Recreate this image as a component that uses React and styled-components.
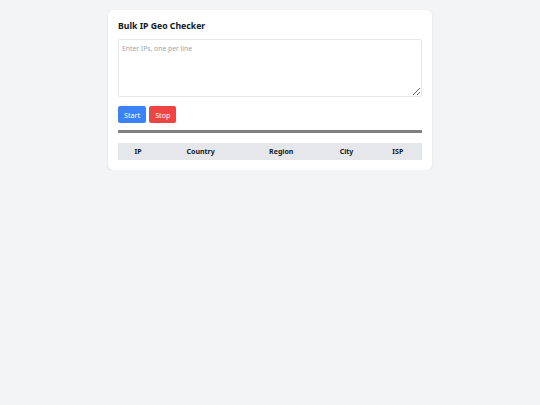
import React, { useState } from 'react';
import styled, { createGlobalStyle } from 'styled-components';

const GlobalStyle = createGlobalStyle`
  body {
    margin: 0;
    background: #f3f4f6;
    font-family: "Noto Sans", "Open Sans", sans-serif;
    color: #111827;
  }
`;

const Card = styled.div`
  width: 304px;
  margin: 10px auto 0;
  padding: 10px;
  background: #fff;
  border-radius: 6px;
  box-shadow: 0 1px 3px rgba(0, 0, 0, 0.08);
`;

const Title = styled.h1`
  margin: 0 0 7px;
  font-size: 8.7px;
  line-height: 12px;
  font-weight: 700;
`;

const TextArea = styled.textarea`
  display: block;
  box-sizing: border-box;
  width: 100%;
  height: 58px;
  padding: 4px 3px;
  border: 1px solid #e5e7eb;
  border-radius: 2px;
  font-family: inherit;
  font-size: 6.8px;
  resize: vertical;
  outline: none;

  &::placeholder {
    color: #9ca3af;
  }
`;

const Actions = styled.div`
  display: flex;
  gap: 3px;
  margin-top: 9px;
`;

const Button = styled.button`
  height: 17px;
  padding: 0 6px;
  border: none;
  border-radius: 2px;
  background: ${(p) => (p.$danger ? '#ef4444' : '#3b82f6')};
  color: #fff;
  font-family: inherit;
  font-size: 7.2px;
  cursor: pointer;
`;

const Progress = styled.div`
  height: 3px;
  margin-top: 7px;
  background: #808080;
`;

const Table = styled.table`
  width: 100%;
  margin-top: 10px;
  border-collapse: collapse;
  font-size: 7px;
`;

const Th = styled.th`
  height: 17px;
  padding: 0 6px;
  background: #e5e7eb;
  font-weight: 700;
  text-align: center;
`;

const App = () => {
  const [ips, setIps] = useState('');

  return (
    <>
      <GlobalStyle />
      <Card>
        <Title>Bulk IP Geo Checker</Title>
        <TextArea
          placeholder="Enter IPs, one per line"
          value={ips}
          onChange={(e) => setIps(e.target.value)}
        />
        <Actions>
          <Button>Start</Button>
          <Button $danger>Stop</Button>
        </Actions>
        <Progress />
        <Table>
          <thead>
            <tr>
              <Th>IP</Th>
              <Th>Country</Th>
              <Th>Region</Th>
              <Th>City</Th>
              <Th>ISP</Th>
            </tr>
          </thead>
        </Table>
      </Card>
    </>
  );
};

export default App;
